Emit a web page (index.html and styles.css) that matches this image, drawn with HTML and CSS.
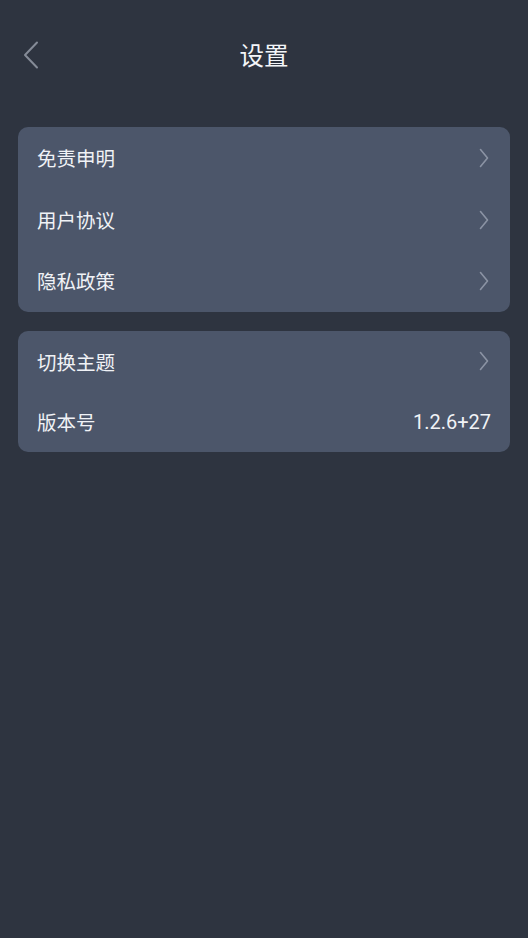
FILE: index.html
```html
<!DOCTYPE html>
<html lang="zh-CN">
<head>
<meta charset="utf-8">
<title>设置</title>
<link rel="stylesheet" href="styles.css">
</head>
<body>
<div class="page">
  <header class="header">
    <span class="back">
      <svg width="16" height="28" viewBox="0 0 16 28"><path d="M14 1.5 L2 14 L14 26.5" fill="none" stroke="#858b97" stroke-width="2" stroke-linecap="round" stroke-linejoin="round"/></svg>
    </span>
    <h1 class="title">设置</h1>
  </header>
  <main class="content">
    <section class="card card-first">
      <div class="row"><span class="label">免责申明</span><span class="chev"><svg width="10" height="20" viewBox="0 0 10 20"><path d="M1.5 1.5 L8.5 10 L1.5 18.5" fill="none" stroke="#8b93a4" stroke-width="1.6" stroke-linecap="round" stroke-linejoin="round"/></svg></span></div>
      <div class="row"><span class="label">用户协议</span><span class="chev"><svg width="10" height="20" viewBox="0 0 10 20"><path d="M1.5 1.5 L8.5 10 L1.5 18.5" fill="none" stroke="#8b93a4" stroke-width="1.6" stroke-linecap="round" stroke-linejoin="round"/></svg></span></div>
      <div class="row"><span class="label">隐私政策</span><span class="chev"><svg width="10" height="20" viewBox="0 0 10 20"><path d="M1.5 1.5 L8.5 10 L1.5 18.5" fill="none" stroke="#8b93a4" stroke-width="1.6" stroke-linecap="round" stroke-linejoin="round"/></svg></span></div>
    </section>
    <section class="card">
      <div class="row"><span class="label">切换主题</span><span class="chev"><svg width="10" height="20" viewBox="0 0 10 20"><path d="M1.5 1.5 L8.5 10 L1.5 18.5" fill="none" stroke="#8b93a4" stroke-width="1.6" stroke-linecap="round" stroke-linejoin="round"/></svg></span></div>
      <div class="row"><span class="label">版本号</span><span class="value">1.2.6+27</span></div>
    </section>
  </main>
</div>
</body>
</html>
```
FILE: styles.css
```css
* { box-sizing: border-box; }
html, body {
  margin: 0;
  padding: 0;
  background: #2e3440;
}
body {
  font-family: "Noto Sans CJK SC", "Noto Sans", sans-serif;
  color: #eceff4;
}
.page {
  min-height: 938px;
  background: #2e3440;
}
.header {
  position: relative;
  height: 112px;
  display: flex;
  align-items: center;
  justify-content: center;
  padding-bottom: 2px;
}
.back {
  position: absolute;
  left: 23px;
  top: 41px;
  width: 16px;
  height: 28px;
  display: flex;
}
.title {
  margin: 0;
  font-size: 24.5px;
  font-weight: 400;
  line-height: 1;
  color: #f4f6f9;
}
.content {
  padding: 15px 18px 0;
  display: flex;
  flex-direction: column;
  gap: 19px;
}
.card {
  background: #4c566a;
  border-radius: 10px;
  display: flex;
  flex-direction: column;
}
.card-first .row { height: 61.7px; }
.row {
  height: 60.5px;
  display: flex;
  align-items: center;
  justify-content: space-between;
  padding: 0 19px 0 19px;
}
.label {
  font-size: 19.5px;
  line-height: 1;
  color: #f0f2f6;
}
.chev {
  display: flex;
  width: 10px;
  height: 20px;
  margin-right: 2px;
}
.value {
  font-family: Roboto, "Noto Sans", sans-serif;
  font-size: 20px;
  line-height: 1;
  color: #f0f2f6;
}
```
